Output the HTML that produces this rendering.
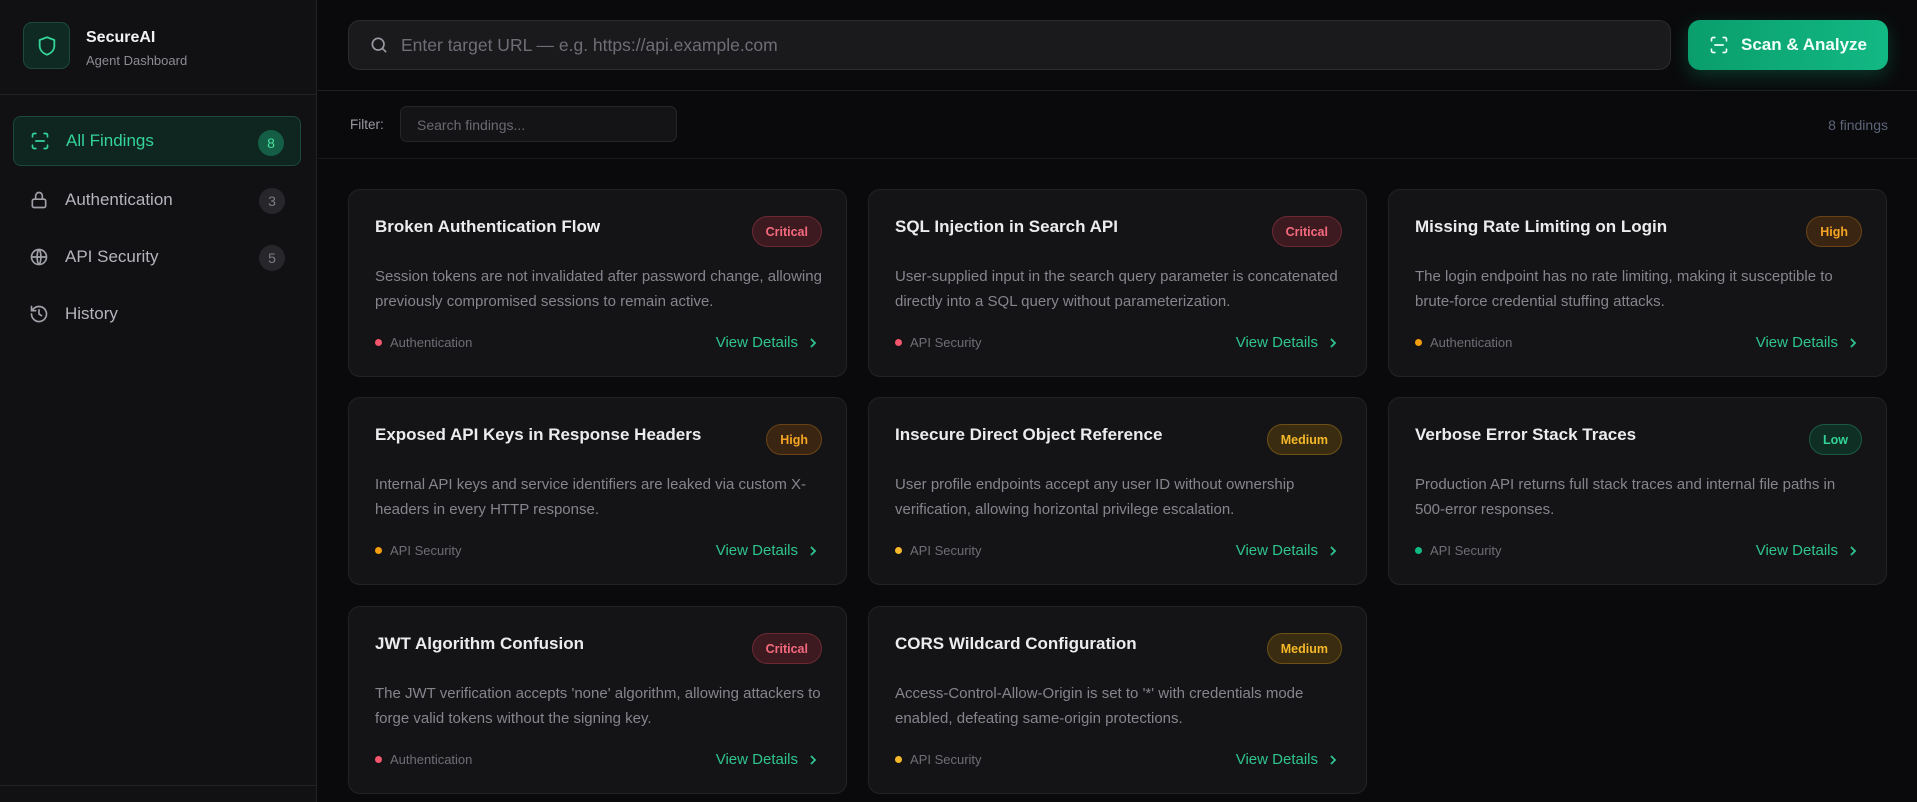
<!DOCTYPE html>
<html><head><meta charset="utf-8"><style>
*{box-sizing:border-box;margin:0;padding:0}
body{width:1917px;height:802px;overflow:hidden;background:#0a0a0c;font-family:"Liberation Sans",sans-serif;color:#e8e8ea;position:relative}
.side{position:absolute;left:0;top:0;width:317px;height:802px;background:#111113;border-right:1px solid #222226}
.logo{position:absolute;left:23px;top:22px;width:47px;height:47px;border-radius:9px;background:#0f2a22;border:1px solid #1d4a3a;display:flex;align-items:center;justify-content:center}
.brand{position:absolute;left:86px;top:29px;font-weight:bold;font-size:16px;color:#f2f2f4}
.sub{position:absolute;left:86px;top:53px;font-size:13px;color:#8c8c94}
.div1{position:absolute;left:0;top:94px;width:317px;border-top:1px solid #222226}
.nav{position:absolute;left:13px;width:288px;height:50px;border-radius:8px;display:flex;align-items:center;padding-left:16px;font-size:17px;color:#b4b4bc}
.nav svg{margin-right:16px}
.nav.act{background:#0f2620;border:1px solid #1b4a3a;color:#34d399}
.bdg{position:absolute;right:16px;top:13px;width:26px;height:26px;border-radius:13px;background:#27272b;color:#7c7c84;font-size:14px;display:flex;align-items:center;justify-content:center}
.act .bdg{background:#135e45;color:#4ade9e}
.div2{position:absolute;left:0;top:785px;width:317px;border-top:1px solid #222226}
.search{position:absolute;left:348px;top:20px;width:1323px;height:50px;border-radius:12px;background:#1a1a1d;border:1px solid #2c2c30;display:flex;align-items:center;padding-left:20px;font-size:17.5px;color:#6e6e76}
.search svg{margin-right:12px}
.btn{position:absolute;left:1688px;top:20px;width:200px;height:50px;border-radius:12px;background:linear-gradient(90deg,#0a9e6c,#12b883);display:flex;align-items:center;justify-content:center;font-weight:bold;font-size:17px;color:#f0fff8;box-shadow:0 6px 18px rgba(16,185,129,.25)}
.btn svg{margin-right:12px}
.hb{position:absolute;left:318px;top:90px;width:1599px;border-top:1px solid #1f1f23}
.hb2{position:absolute;left:318px;top:158px;width:1599px;border-top:1px solid #1a1a1e}
.flab{position:absolute;left:350px;top:117px;font-size:13.5px;color:#9a9aa2}
.finp{position:absolute;left:400px;top:106px;width:277px;height:36px;border-radius:7px;background:#141417;border:1px solid #26262a;font-size:14px;color:#6a6a72;padding:10px 16px}
.cnt{position:absolute;right:29px;top:117px;font-size:14px;color:#5d6478}
.card{position:absolute;width:499px;height:188px;background:#141416;border:1px solid #232327;border-radius:12px}
.t{position:absolute;left:26px;top:27px;font-weight:bold;font-size:17px;color:#ececee}
.sev{position:absolute;right:24px;top:26px;height:31px;border-radius:16px;font-weight:bold;font-size:12.5px;padding:0 13px;display:flex;align-items:center}
.crit{background:#3d1a20;border:1px solid #6b2a33;color:#f56a7e}
.high{background:#3a2512;border:1px solid #6a4318;color:#f5a524}
.med{background:#3a2c10;border:1px solid #6d5216;color:#f5b82a}
.low{background:#0f2f24;border:1px solid #1c5a43;color:#34d399}
.d{position:absolute;left:26px;top:74px;width:450px;font-size:15px;line-height:25px;color:#85858d}
.cat{position:absolute;left:26px;top:145px;font-size:13px;color:#6e6e76;display:flex;align-items:center}
.dot{width:7px;height:7px;border-radius:4px;margin-right:8px}
.vd{position:absolute;right:28px;top:144px;font-size:15px;color:#2fc48d;display:flex;align-items:center}
.vd svg{margin-left:10px}
</style></head><body>
<div class="side">
<div class="logo"><svg width="22" height="24" viewBox="0 0 24 24" fill="none" stroke="#34d399" stroke-width="2" stroke-linejoin="round"><path d="M12 2.5l8 3v6c0 5-3.5 8.5-8 10-4.5-1.5-8-5-8-10v-6z"/></svg></div>
<div class="brand">SecureAI</div><div class="sub">Agent Dashboard</div>
<div class="div1"></div>
<div class="nav act" style="top:116px"><svg width="20" height="20" viewBox="0 0 24 24" fill="none" stroke="#34d399" stroke-width="2" stroke-linecap="round"><path d="M3 7V5a2 2 0 0 1 2-2h2M17 3h2a2 2 0 0 1 2 2v2M21 17v2a2 2 0 0 1-2 2h-2M7 21H5a2 2 0 0 1-2-2v-2M7 12h10"/></svg>All Findings<span class="bdg">8</span></div>
<div class="nav" style="top:175px"><svg width="20" height="20" viewBox="0 0 24 24" fill="none" stroke="#a0a0a8" stroke-width="2"><rect x="4" y="11" width="16" height="10" rx="2"/><path d="M8 11V7a4 4 0 0 1 8 0v4"/></svg>Authentication<span class="bdg">3</span></div>
<div class="nav" style="top:232px"><svg width="20" height="20" viewBox="0 0 24 24" fill="none" stroke="#a0a0a8" stroke-width="2"><circle cx="12" cy="12" r="9"/><path d="M3 12h18M12 3c3 3 3 15 0 18M12 3c-3 3-3 15 0 18"/></svg>API Security<span class="bdg">5</span></div>
<div class="nav" style="top:289px"><svg width="20" height="20" viewBox="0 0 24 24" fill="none" stroke="#a0a0a8" stroke-width="2" stroke-linecap="round"><path d="M3 12a9 9 0 1 0 3-6.7L3 8M3 3v5h5M12 7v5l3 2"/></svg>History</div>
<div class="div2"></div>
</div>
<div class="search"><svg width="20" height="20" viewBox="0 0 24 24" fill="none" stroke="#9a9aa2" stroke-width="2" stroke-linecap="round"><circle cx="11" cy="11" r="7"/><path d="M20 20l-4-4"/></svg>Enter target URL — e.g. https://api.example.com</div>
<div class="btn"><svg width="20" height="20" viewBox="0 0 24 24" fill="none" stroke="#eafff5" stroke-width="2" stroke-linecap="round"><path d="M3 7V5a2 2 0 0 1 2-2h2M17 3h2a2 2 0 0 1 2 2v2M21 17v2a2 2 0 0 1-2 2h-2M7 21H5a2 2 0 0 1-2-2v-2M7 12h10"/></svg>Scan &amp; Analyze</div>
<div class="hb"></div>
<div class="flab">Filter:</div><div class="finp">Search findings...</div><div class="cnt">8 findings</div>
<div class="hb2"></div>

<div class="card" style="left:348px;top:189px"><div class="t">Broken Authentication Flow</div><div class="sev crit">Critical</div><div class="d">Session tokens are not invalidated after password change, allowing previously compromised sessions to remain active.</div><div class="cat"><span class="dot" style="background:#f4566e"></span>Authentication</div><div class="vd">View Details<svg width="10" height="12" viewBox="0 0 10 12" fill="none" stroke="#2fc48d" stroke-width="1.8"><path d="M3 2l4 4-4 4"/></svg></div></div>
<div class="card" style="left:868px;top:189px"><div class="t">SQL Injection in Search API</div><div class="sev crit">Critical</div><div class="d">User-supplied input in the search query parameter is concatenated directly into a SQL query without parameterization.</div><div class="cat"><span class="dot" style="background:#f4566e"></span>API Security</div><div class="vd">View Details<svg width="10" height="12" viewBox="0 0 10 12" fill="none" stroke="#2fc48d" stroke-width="1.8"><path d="M3 2l4 4-4 4"/></svg></div></div>
<div class="card" style="left:1388px;top:189px"><div class="t">Missing Rate Limiting on Login</div><div class="sev high">High</div><div class="d">The login endpoint has no rate limiting, making it susceptible to brute-force credential stuffing attacks.</div><div class="cat"><span class="dot" style="background:#f59e0b"></span>Authentication</div><div class="vd">View Details<svg width="10" height="12" viewBox="0 0 10 12" fill="none" stroke="#2fc48d" stroke-width="1.8"><path d="M3 2l4 4-4 4"/></svg></div></div>

<div class="card" style="left:348px;top:397px"><div class="t">Exposed API Keys in Response Headers</div><div class="sev high">High</div><div class="d">Internal API keys and service identifiers are leaked via custom X-headers in every HTTP response.</div><div class="cat"><span class="dot" style="background:#f59e0b"></span>API Security</div><div class="vd">View Details<svg width="10" height="12" viewBox="0 0 10 12" fill="none" stroke="#2fc48d" stroke-width="1.8"><path d="M3 2l4 4-4 4"/></svg></div></div>
<div class="card" style="left:868px;top:397px"><div class="t">Insecure Direct Object Reference</div><div class="sev med">Medium</div><div class="d">User profile endpoints accept any user ID without ownership verification, allowing horizontal privilege escalation.</div><div class="cat"><span class="dot" style="background:#f5b82a"></span>API Security</div><div class="vd">View Details<svg width="10" height="12" viewBox="0 0 10 12" fill="none" stroke="#2fc48d" stroke-width="1.8"><path d="M3 2l4 4-4 4"/></svg></div></div>
<div class="card" style="left:1388px;top:397px"><div class="t">Verbose Error Stack Traces</div><div class="sev low">Low</div><div class="d">Production API returns full stack traces and internal file paths in 500-error responses.</div><div class="cat"><span class="dot" style="background:#10b981"></span>API Security</div><div class="vd">View Details<svg width="10" height="12" viewBox="0 0 10 12" fill="none" stroke="#2fc48d" stroke-width="1.8"><path d="M3 2l4 4-4 4"/></svg></div></div>

<div class="card" style="left:348px;top:606px"><div class="t">JWT Algorithm Confusion</div><div class="sev crit">Critical</div><div class="d">The JWT verification accepts 'none' algorithm, allowing attackers to forge valid tokens without the signing key.</div><div class="cat"><span class="dot" style="background:#f4566e"></span>Authentication</div><div class="vd">View Details<svg width="10" height="12" viewBox="0 0 10 12" fill="none" stroke="#2fc48d" stroke-width="1.8"><path d="M3 2l4 4-4 4"/></svg></div></div>
<div class="card" style="left:868px;top:606px"><div class="t">CORS Wildcard Configuration</div><div class="sev med">Medium</div><div class="d">Access-Control-Allow-Origin is set to '*' with credentials mode enabled, defeating same-origin protections.</div><div class="cat"><span class="dot" style="background:#f5b82a"></span>API Security</div><div class="vd">View Details<svg width="10" height="12" viewBox="0 0 10 12" fill="none" stroke="#2fc48d" stroke-width="1.8"><path d="M3 2l4 4-4 4"/></svg></div></div>
</body></html>
